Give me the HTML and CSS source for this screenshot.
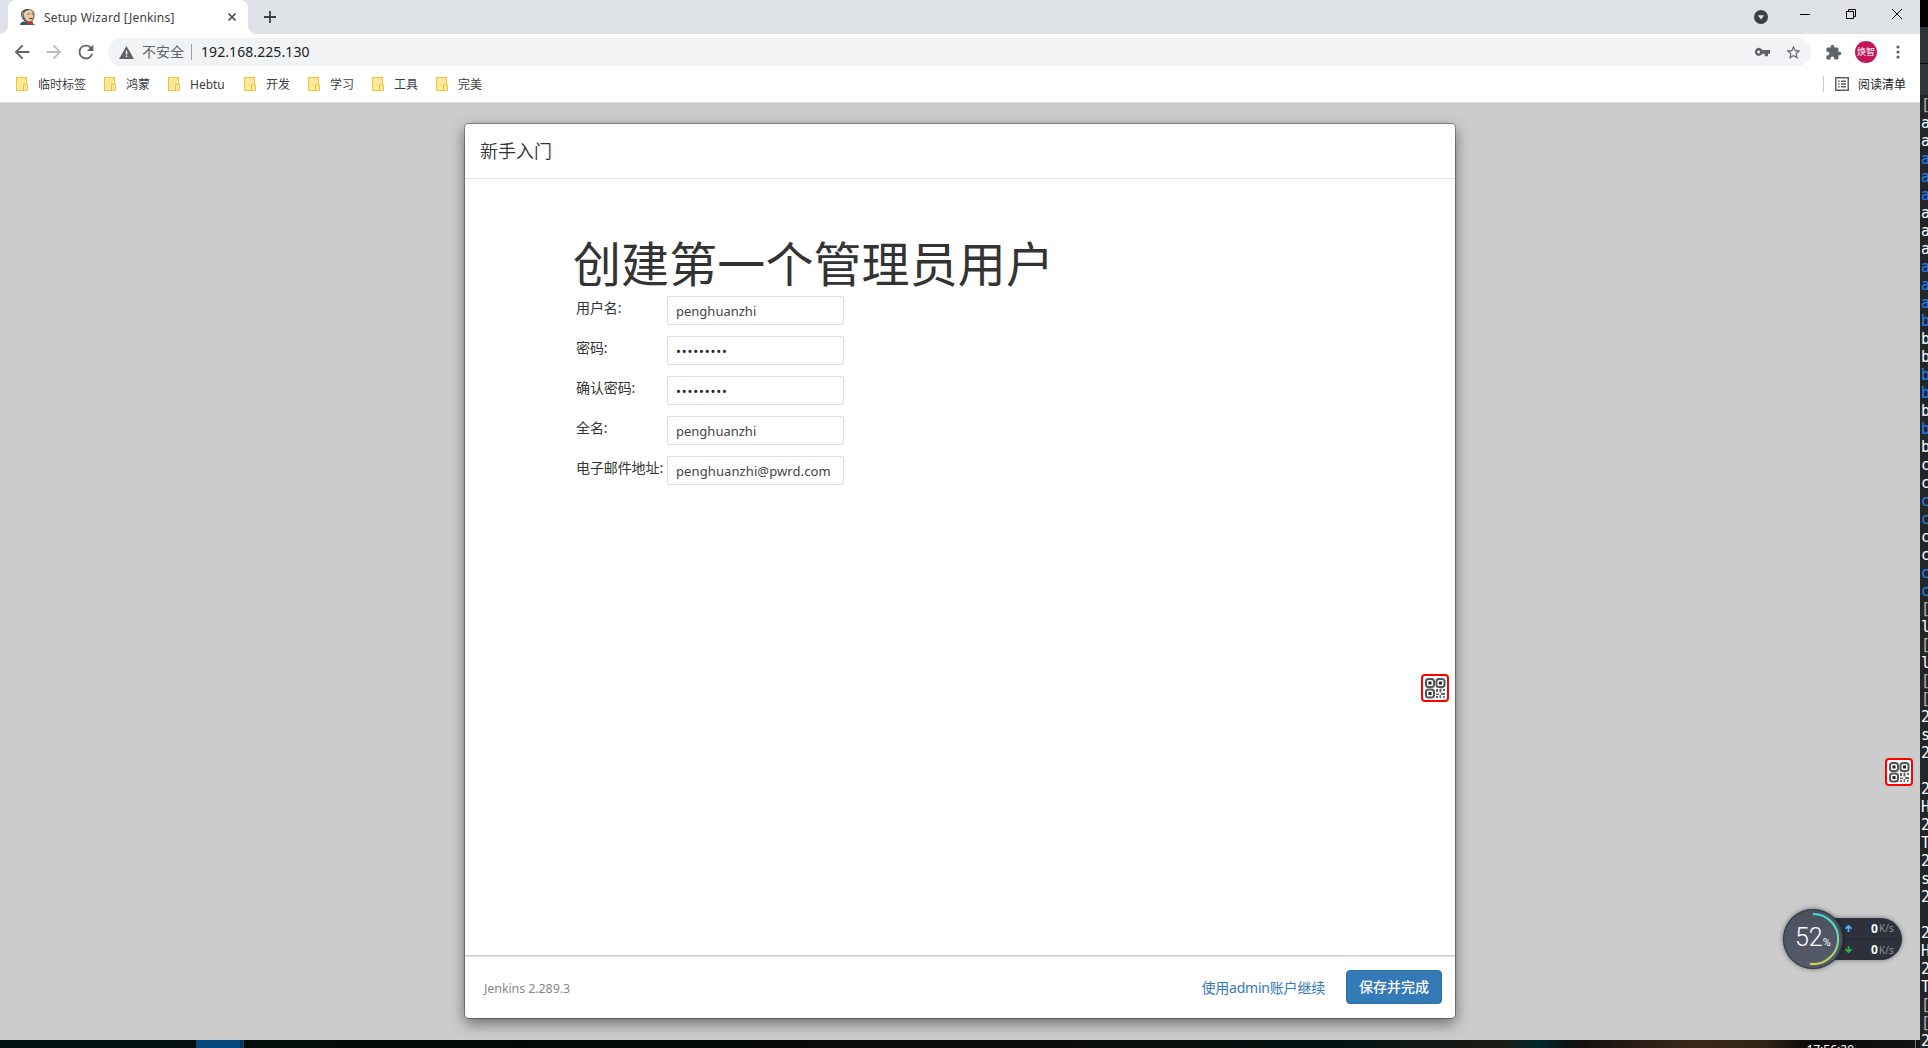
FILE: index.html
```html
<!DOCTYPE html>
<html lang="zh-CN">
<head>
<meta charset="utf-8">
<title>Setup Wizard [Jenkins]</title>
<link rel="stylesheet" href="styles.css">
</head>
<body>
<div class="desktop">
  <div class="left">
    <div class="browser">
      <div class="tabstrip">
        <div class="tab">
          <svg class="favicon" width="16" height="16" viewBox="0 0 16 16"><path d="M0 16c0-2 2-3.500 4-3.500h7l4 3.500z" fill="#33566b"/><path d="M1 5c0-3 3-5 7-5s7 3 6.500 6c0 4-2 7.500-6 7.500S1 9 1 5z" fill="#5a4a43"/><path d="M4 4c1-2 3-3 5.500-3C12 1 13.500 3 13.500 6s-1 6.500-4.500 6.500S3.500 8 4 4z" fill="#e9cba9"/><path d="M2 4c1-2 3-2 2 1s-1 4 0 5c-2-1-3-3-2-6z" fill="#8a8a8a"/><path d="M7.500 5h2M11.500 5h1.500M9 9.500h3.500" stroke="#54423a"/><path d="M7 12.500l3 1 3-1V16l-3-1-3 1z" fill="#d33833"/></svg>
          <span class="tab-title">Setup Wizard [Jenkins]</span>
          <svg class="tab-close" width="8" height="8" viewBox="0 0 8 8"><path d="M.5.5l7 7M7.500.5l-7 7" stroke="#3c4043" stroke-width="1.500"/></svg>
        </div>
        <svg class="newtab" width="12" height="12" viewBox="0 0 12 12"><path d="M6 0v12M0 6h12" stroke="#3c4043" stroke-width="1.800"/></svg>
        <div class="wincontrols">
          <svg class="search-tabs" width="14" height="14" viewBox="0 0 14 14"><circle cx="7" cy="7" r="7" fill="#3c4043"/><path d="M3.800 5.200h6.400L7 9.500z" fill="#dee1e6"/></svg>
          <svg width="10" height="10" viewBox="0 0 10 10"><path d="M0 5.500h10" stroke="#000"/></svg>
          <svg width="10" height="10" viewBox="0 0 10 10" fill="none" stroke="#000"><path d="M.5 2.500h7v7h-7zM2.500 2.500v-2h7v7h-2"/></svg>
          <svg width="10" height="10" viewBox="0 0 10 10"><path d="M0 0l10 10M10 0L0 10" stroke="#000"/></svg>
        </div>
      </div>
      <div class="toolbar">
        <svg class="nav" width="22" height="22" viewBox="0 0 24 24"><path fill="#5f6368" d="M20 11H7.830l5.590-5.590L12 4l-8 8 8 8 1.410-1.410L7.830 13H20v-2z"/></svg>
        <svg class="nav" width="22" height="22" viewBox="0 0 24 24"><path fill="#babcbe" d="M12 4l-1.410 1.410L16.170 11H4v2h12.170l-5.580 5.590L12 20l8-8z"/></svg>
        <svg class="nav" width="22" height="22" viewBox="0 0 24 24"><path fill="#5f6368" d="M17.650 6.350A7.958 7.958 0 0 0 12 4a8 8 0 1 0 7.730 10h-2.080A6 6 0 1 1 12 6c1.660 0 3.140.69 4.220 1.780L13 11h7V4l-2.350 2.350z"/></svg>
        <div class="omnibox">
          <svg width="15" height="13" viewBox="0 0 15 13"><path fill="#5f6368" fill-rule="evenodd" d="M7.500 0L15 13H0zM6.800 4.800v3.600h1.500V4.800zm0 4.700V11h1.500V9.500z"/></svg>
          <span class="insecure">不安全</span>
          <span class="url">192.168.225.130</span>
          <svg class="key" width="16" height="16" viewBox="0 0 24 24"><path fill="#5f6368" d="M12.650 9A6 6 0 1 0 12.650 14.500H16V18.500h5v-4h3V9zM7 14.200a2.200 2.200 0 1 1 0-4.400 2.200 2.200 0 0 1 0 4.400z"/></svg>
          <svg width="17" height="17" viewBox="0 0 24 24"><path fill="#5f6368" d="M22 9.240l-7.190-.62L12 2 9.190 8.630 2 9.240l5.460 4.730L5.820 21 12 17.270 18.180 21l-1.630-7.030L22 9.240zM12 15.400l-3.760 2.270 1-4.280-3.320-2.880 4.380-.38L12 6.100l1.710 4.040 4.380.38-3.320 2.880 1 4.280L12 15.400z"/></svg>
        </div>
        <svg class="ext" width="17" height="17" viewBox="0 0 24 24"><path fill="#5f6368" d="M20.500 11H19V7c0-1.100-.9-2-2-2h-4V3.500a2.500 2.500 0 0 0-5 0V5H4c-1.100 0-1.990.9-1.990 2v3.800H3.500c1.490 0 2.700 1.210 2.700 2.700s-1.210 2.700-2.700 2.700H2V20c0 1.100.9 2 2 2h3.800v-1.500c0-1.490 1.210-2.700 2.700-2.700s2.700 1.210 2.700 2.700V22H17c1.100 0 2-.9 2-2v-4h1.500a2.500 2.500 0 0 0 0-5z"/></svg>
        <div class="avatar">焕智</div>
        <svg width="4" height="14" viewBox="0 0 4 14" fill="#5f6368"><circle cx="2" cy="2" r="1.600"/><circle cx="2" cy="7" r="1.600"/><circle cx="2" cy="12" r="1.600"/></svg>
      </div>
      <div class="bookmarks">
        <span class="bm"><i class="folder"></i><b class="w4">临时标签</b></span>
        <span class="bm"><i class="folder"></i><b class="w2">鸿蒙</b></span>
        <span class="bm"><i class="folder"></i><b class="w3">Hebtu</b></span>
        <span class="bm"><i class="folder"></i><b class="w2">开发</b></span>
        <span class="bm"><i class="folder"></i><b class="w2">学习</b></span>
        <span class="bm"><i class="folder"></i><b class="w2">工具</b></span>
        <span class="bm"><i class="folder"></i><b class="w2">完美</b></span>
        <span class="reading"><svg width="14" height="14" viewBox="0 0 14 14"><path d="M.75.75h12.500v12.500H.75z" fill="none" stroke="#5f6368" stroke-width="1.500"/><path d="M3 4.200h1.600M6 4.200h5M3 7h1.600M6 7h5M3 9.800h1.600M6 9.800h5" stroke="#5f6368" stroke-width="1.400"/></svg><b>阅读清单</b></span>
      </div>
      <div class="page">
        <div class="modal">
          <div class="modal-header">新手入门</div>
          <div class="modal-body">
            <h1>创建第一个管理员用户</h1>
            <div class="form">
              <label>用户名:</label><div class="input">penghuanzhi</div>
              <label>密码:</label><div class="input dots">•••••••••</div>
              <label>确认密码:</label><div class="input dots">•••••••••</div>
              <label>全名:</label><div class="input">penghuanzhi</div>
              <label>电子邮件地址:</label><div class="input mail">penghuanzhi@pwrd.com</div>
            </div>
          </div>
          <div class="modal-footer">
            <span class="version">Jenkins 2.289.3</span>
            <a class="link">使用admin账户继续</a>
            <span class="btn">保存并完成</span>
          </div>
        </div>
      </div>
    </div>
    <div class="taskbar"><div class="task-active"></div><div class="clock">17:56:20</div><div class="peek"></div></div>
  </div>
  <div class="terminal">
    <div class="term-tab"></div><div class="term-bar"></div>
    <div class="term-text"><span>[</span>
a
a
<em>a
a
a</em>
a
a
a
<em>a
a
a
b</em>
b
b
<em>b
b</em>
b
<em>b</em>
b
c
c
<em>c
c</em>
c
c
<em>c
c</em>
<span>[</span>
l
<span>[</span>
l
<span>[
[</span>
2
s
2

2
H
2
T
2
s
2

2
H
2
T
<span>[
[</span>
2</div>
  </div>
  <svg width="0" height="0" class="defs"><defs><symbol id="qr" viewBox="0 0 28 28"><rect x="1" y="1" width="26" height="26" rx="3" fill="#fff" stroke="#f00" stroke-width="2"/><g fill="none" stroke="#555" stroke-width="2"><rect x="5" y="5" width="8" height="8" rx="2.500"/><rect x="15.500" y="5" width="8" height="8" rx="2.500"/><rect x="5" y="15.500" width="8" height="8" rx="2.500"/></g><path fill="#222" d="M7.500 7.500h3v3h-3zM18 7.500h3v3h-3zM7.500 18h3v3h-3z"/><path fill="#666" d="M15 15h2v3h-2zM18.500 14.500h2v4h-2zM22 15h2v2h-2zM15 19.500h3v1.500h-3zM20 19h4v2h-4zM15 22h2v2h-2zM18.500 21h1.500v3h-1.500zM22 22h1.500v2H22z"/></g></symbol></defs></svg>
  <svg class="qr qr-modal" width="28" height="28"><use href="#qr"/></svg>
  <svg class="qr qr-page" width="28" height="28"><use href="#qr"/></svg>
  <div class="monitor">
    <div class="speeds">
      <div class="speed"><svg width="7" height="7" viewBox="0 0 7 7"><path d="M3.500 7V1M.5 3.800l3-3 3 3" fill="none" stroke="#4cb4f5" stroke-width="1.700"/></svg><strong>0</strong><small>K/s</small></div>
      <div class="speed"><svg width="7" height="7" viewBox="0 0 7 7"><path d="M3.500 0v6M.5 3.200l3 3 3-3" fill="none" stroke="#2fb344" stroke-width="1.700"/></svg><strong>0</strong><small>K/s</small></div>
    </div>
    <div class="gauge">
      <svg class="arc" width="60" height="60" viewBox="0 0 60 60"><defs><linearGradient id="g" x1="0" y1="0" x2="0" y2="1"><stop offset="0" stop-color="#3fe0dc"/><stop offset=".6" stop-color="#7fdc90"/><stop offset="1" stop-color="#d6d850"/></linearGradient></defs><path d="M30 5a25 25 0 1 1-3 49.800" fill="none" stroke="url(#g)" stroke-width="2"/></svg>
      <span class="num">52</span><span class="pct">%</span>
    </div>
  </div>
</div>
</body>
</html>
```
FILE: styles.css
```css
* { box-sizing: border-box; }
body { margin: 0; font-family: "Noto Sans", "Noto Sans CJK SC", sans-serif; }
svg { flex: none; display: block; }
.desktop { position: relative; width: 1928px; height: 1048px; overflow: hidden; display: flex; background: #000; }
.left { width: 1920px; flex: none; }
.browser { height: 1040px; display: flex; flex-direction: column; background: #fff; }

.tabstrip { height: 34px; background: #dee1e6; display: flex; align-items: center; padding-left: 8px; flex: none; }
.tab { position: relative; width: 240px; height: 34px; background: #fff; border-radius: 8px 8px 0 0; display: flex; align-items: center; padding: 0 12px; }
.tab::before, .tab::after { content: ""; position: absolute; bottom: 0; width: 8px; height: 8px; }
.tab::before { left: -8px; background: radial-gradient(circle at 0 0, #dee1e6 7.500px, #fff 8px); }
.tab::after { right: -8px; background: radial-gradient(circle at 100% 0, #dee1e6 7.500px, #fff 8px); }
.tab-title { margin-left: 8px; font-size: 12px; letter-spacing: .18px; color: #3c4043; white-space: nowrap; }
.tab-close { margin-left: auto; }
.newtab { margin-left: 16px; }
.wincontrols { margin: -6px 18px 0 auto; display: flex; align-items: center; gap: 36px; }
.search-tabs { margin: 6px -4px 0 0; }

.toolbar { height: 36px; flex: none; display: flex; align-items: center; padding: 0 20px 0 11px; }
.nav { margin-right: 10px; }
.omnibox { width: 1704px; height: 28px; margin-left: 1px; border-radius: 14px; background: #f1f3f4; display: flex; align-items: center; padding: 0 9px 0 11px; font-size: 14px; }
.insecure { margin-left: 8px; padding-right: 7px; border-right: 1px solid #9aa0a6; line-height: 15px; height: 16px; color: #5f6368; white-space: nowrap; }
.url { margin: -2px 0 0 9px; color: #202124; letter-spacing: .08px; }
.key { margin: 0 15px 0 auto; }
.ext { margin-left: 14px; }
.avatar { width: 22px; height: 22px; border-radius: 50%; background: #c2185b; color: #fff; font-size: 9px; line-height: 22px; text-align: center; margin: 0 19px 0 13px; white-space: nowrap; flex: none; }

.bookmarks { height: 33px; flex: none; border-bottom: 1px solid #dadce0; display: flex; align-items: center; padding: 0 14px 4px 16px; font-size: 12px; color: #3c4043; }
.bm { display: flex; align-items: center; margin-right: 18px; }
.bookmarks b { font-weight: 400; white-space: nowrap; line-height: 18px; padding-top: 2px; }
.w4 { width: 48px; } .w2 { width: 24px; } .w3 { width: 36px; }
.folder { position: relative; width: 11px; height: 14px; background: #ffe794; border: 1px solid #e8c545; margin-right: 11px; }
.folder::after { content: ""; position: absolute; right: -2px; bottom: -1px; width: 3px; height: 5px; background: #ffe794; border: 1px solid #e8c545; border-radius: 1px; }
.reading { margin-left: auto; height: 16px; border-left: 1px solid #c8cacd; padding-left: 11px; display: flex; align-items: center; gap: 9px; color: #202124; }

.page { flex: 1; background: #ccc; padding: 21px 0 0 465px; overflow: hidden; }
.modal { width: 990px; height: 894px; background: #fff; border-radius: 4px; box-shadow: 0 0 0 1px rgba(0,0,0,.3), 0 5px 15px rgba(0,0,0,.5); display: flex; flex-direction: column; color: #333; }
.modal-header { height: 55px; border-bottom: 1px solid #e5e5e5; padding-left: 15px; font-size: 18px; line-height: 55px; font-weight: 350; }
.modal-body { flex: 1; padding: 50px 108px 0; }
h1 { margin: 0; height: 67px; line-height: 69px; font-size: 48px; font-weight: 400; letter-spacing: .1px; white-space: nowrap; }
.form { display: grid; grid-template-columns: 91px 177px; row-gap: 11px; padding-left: 3px; }
label { font-size: 14px; line-height: 24px; height: 29px; white-space: nowrap; letter-spacing: -.1px; }
.input { height: 29px; border: 1px solid #ddd; border-radius: 2px; padding-left: 8px; font-size: 13px; line-height: 28px; color: #444; white-space: nowrap; }
.dots { letter-spacing: .85px; color: #222; }
.mail { letter-spacing: .1px; }
.modal-footer { height: 63px; border-top: 1px solid #ccc; box-shadow: inset 0 1px #e5e5e5; display: flex; align-items: center; padding: 0 13px 0 19px; }
.version { font-size: 12.500px; letter-spacing: -.1px; color: #888; margin-top: 3px; }
.link { margin-left: auto; margin-right: 21px; font-size: 14px; letter-spacing: -.2px; color: #337ab7; }
.btn { width: 96px; height: 34px; border: 1px solid #2e6da4; border-radius: 4px; background: #337ab7; color: #fff; font-size: 14px; font-weight: 500; line-height: 31px; text-align: center; }

.taskbar { height: 8px; background: linear-gradient(90deg, #021412, #030807 27%, #0a0c0b 55%, #021412 70%, #1c1a14 78%, #03282c 80%, #101010 82%, #3a2618 88%, #302414 92%, #0c0a0a 94%, #14120f); display: flex; overflow: hidden; }
.task-active { width: 48px; height: 8px; margin-left: 196px; background: linear-gradient(90deg, #05477a 44px, #022a4b 44px, #022a4b 45px, #063f6b 45px); }
.clock { margin-left: auto; margin-right: 61px; padding-top: 4px; color: #fff; font-size: 12px; line-height: 12px; white-space: nowrap; }
.peek { width: 5px; border-left: 1px solid #777; }

.terminal { width: 8px; height: 1048px; overflow: hidden; background: #232629; flex: none; }
.term-tab { height: 64px; border-top: 27px solid #000; border-bottom: 1px solid #0c0d0e; background: #2d3436; }
.term-bar { height: 31px; background: #31363b; }
.term-text { padding: 1px 0 0 1px; white-space: pre; font: 15px/18px "DejaVu Sans Mono", monospace; color: #fcfcfc; }
.term-text em { font-style: normal; color: #1484f5; }
.term-text span { color: #b4b4b4; }

.defs { position: absolute; }
.qr { position: absolute; }
.qr-modal { left: 1421px; top: 674px; }
.qr-page { left: 1885px; top: 758px; }

.monitor { position: absolute; left: 1783px; top: 908px; width: 120px; height: 62px; }
.speeds { position: absolute; left: 40px; top: 10px; width: 79px; height: 42px; border-radius: 0 21px 21px 0; background: #2d313b; box-shadow: 0 0 5px rgba(0,0,0,.4); }
.speed { height: 21px; display: flex; align-items: center; padding: 0 0 1px 22px; color: #fff; }
.speed + .speed { border-top: 1px solid #23262e; }
.speed strong { margin-left: 19px; font-size: 12px; width: 8px; }
.speed small { font-size: 10px; color: #8f939b; }
.gauge { position: absolute; left: 0; top: 1px; width: 60px; height: 60px; border-radius: 50%; background: linear-gradient(#4c5160, #555b6a); box-shadow: inset 0 0 0 1px #343844, 0 0 5px rgba(0,0,0,.5); color: #fff; display: flex; align-items: baseline; padding-left: 12px; }
.arc { position: absolute; left: 0; top: 0; }
.num { font: 300 25px/58px Roboto, sans-serif; }
.pct { font: 11px Roboto, sans-serif; }
```
